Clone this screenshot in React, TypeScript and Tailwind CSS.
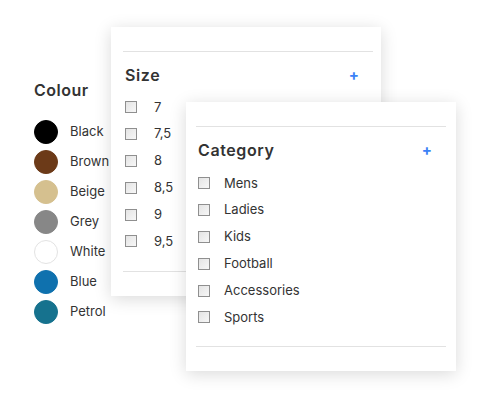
const colours = [
  { name: "Black", hex: "#000000" },
  { name: "Brown", hex: "#6c3a18" },
  { name: "Beige", hex: "#d5c08f" },
  { name: "Grey", hex: "#878787" },
  { name: "White", hex: "#ffffff" },
  { name: "Blue", hex: "#0f71ae" },
  { name: "Petrol", hex: "#16728e" },
];

const sizes = ["7", "7,5", "8", "8,5", "9", "9,5"];
const categories = ["Mens", "Ladies", "Kids", "Football", "Accessories", "Sports"];

function Box() {
  return (
    <span className="block h-[12px] w-[12px] shrink-0 border border-[#8f8f8f] bg-gradient-to-br from-[#e4e4e4] to-[#f7f7f7]" />
  );
}

type CardProps = {
  title: string;
  items: string[];
  pad: string;
  inset: string;
  labelGap: string;
  listTop: string;
};

function FilterCard({ title, items, pad, inset, labelGap, listTop }: CardProps) {
  return (
    <div className={`flex h-[269px] w-[270px] flex-col bg-white pt-[24px] shadow-[0_3px_16px_rgba(0,0,0,0.15)] ${pad}`}>
      <div className="h-px bg-[#e2e2e2]" />
      <div className={`flex items-center justify-between pr-[14px] pt-[11px] ${inset}`}>
        <span className="text-[16px] font-semibold tracking-[0.6px] text-[#333]">{title}</span>
        <span className="text-[15px] font-bold text-[#3b82f6]">+</span>
      </div>
      <ul className={`flex flex-col ${listTop}`}>
        {items.map((it) => (
          <li key={it} className={`flex h-[26.8px] items-center ${inset}`}>
            <Box />
            <span className={`${labelGap} text-[13px] text-[#333]`}>{it}</span>
          </li>
        ))}
      </ul>
      <div className="mt-auto mb-[24px] h-px bg-[#e2e2e2]" />
    </div>
  );
}

export default function App() {
  return (
    <div className="relative h-[400px] w-[500px] overflow-hidden bg-white font-['Inter',sans-serif]">
      {/* colour list */}
      <div className="pl-[34px] pt-[78px]">
        <h3 className="text-[16px] font-semibold tracking-[0.5px] text-[#333]">Colour</h3>
        <ul className="mt-[18px] flex flex-col gap-[6px]">
          {colours.map((c) => (
            <li key={c.name} className="flex items-center gap-[12px]">
              <span
                className="block h-[24px] w-[24px] rounded-full border"
                style={{ backgroundColor: c.hex, borderColor: c.name === "White" ? "#e3e3e3" : c.hex }}
              />
              <span className="text-[13px] text-[#333]">{c.name}</span>
            </li>
          ))}
        </ul>
      </div>

      <div className="absolute left-[111px] top-[27px]">
        <FilterCard
          title="Size"
          items={sizes}
          pad="pl-[12px] pr-[8px]"
          inset="pl-[2px]"
          labelGap="ml-[17px]"
          listTop="mt-[7px]"
        />
      </div>
      <div className="absolute left-[186px] top-[102px]">
        <FilterCard
          title="Category"
          items={categories}
          pad="px-[10px]"
          inset="pl-[2px]"
          labelGap="ml-[14px]"
          listTop="mt-[8px]"
        />
      </div>
    </div>
  );
}
